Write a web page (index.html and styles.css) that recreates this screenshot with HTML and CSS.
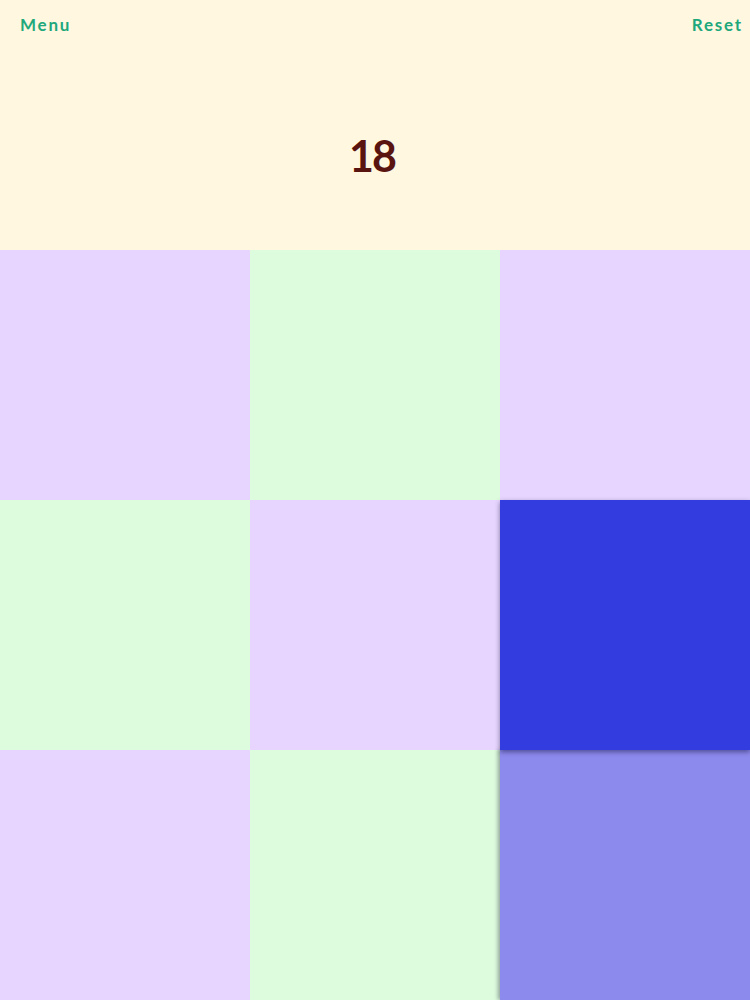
FILE: index.html
```html
<!DOCTYPE html>
<html>
<head>
<meta charset="utf-8">
<link rel="stylesheet" href="styles.css">
</head>
<body>
<div class="app">
  <header class="top">
    <div class="bar">
      <span class="link">Menu</span>
      <span class="link">Reset</span>
    </div>
    <div class="score">18</div>
  </header>
  <main class="grid">
    <div class="cell lav"></div>
    <div class="cell mint"></div>
    <div class="cell lav"></div>
    <div class="cell mint"></div>
    <div class="cell lav"></div>
    <div class="cell blue"></div>
    <div class="cell lav"></div>
    <div class="cell mint"></div>
    <div class="cell light"></div>
  </main>
</div>
</body>
</html>
```
FILE: styles.css
```css
html, body { margin: 0; padding: 0; }
body { width: 750px; height: 1000px; overflow: hidden; background: #fff7e0; font-family: "Lato", "Noto Sans", sans-serif; }
.app { display: flex; flex-direction: column; height: 1000px; }
.top { height: 250px; background: #fff7e0; display: flex; flex-direction: column; }
.bar { display: flex; justify-content: space-between; padding: 13px 7px 0 20px; height: 24px; }
.link { color: #1ea87c; font-weight: 700; font-size: 17px; letter-spacing: 1.8px; line-height: 24px; }
.score { text-align: center; color: #5a1410; font-weight: 700; font-size: 43px; letter-spacing: -2px; line-height: 50px; margin-top: 94px; padding-right: 6px; }
.grid { display: grid; grid-template-columns: repeat(3, 250px); grid-template-rows: repeat(3, 250px); }
.cell { position: relative; }
.lav { background: #e7d5ff; }
.mint { background: #ddfbdd; }
.blue { background: #333ddf; z-index: 2; box-shadow: 0 2px 5px rgba(0,0,30,0.45); }
.light { background: #8d8aee; z-index: 1; box-shadow: -2px 0 4px rgba(0,0,30,0.35); }
```
